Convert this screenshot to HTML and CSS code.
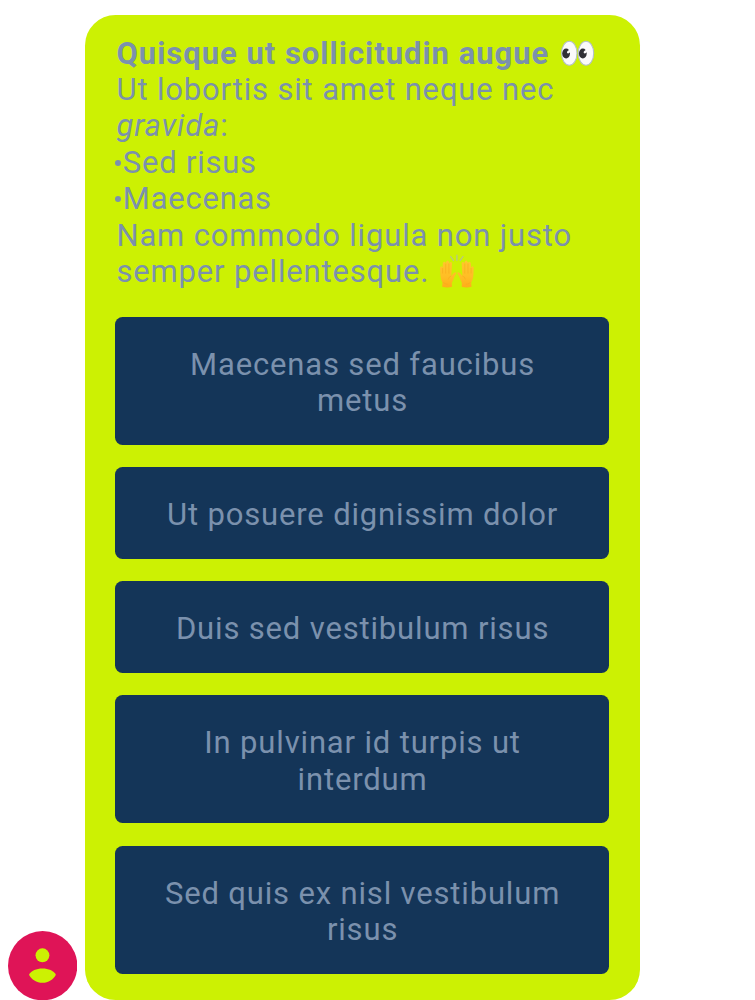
FILE: index.html
```html
<!DOCTYPE html>
<html lang="la">
<head>
<meta charset="utf-8">
<title>Chat message</title>
<link rel="stylesheet" href="styles.css">
</head>
<body>
<main class="message">
  <svg class="avatar" viewBox="0 0 69 69" aria-hidden="true">
    <circle cx="34.5" cy="34.5" r="34.5" fill="#df1457"/>
    <circle cx="34.3" cy="24.2" r="6.9" fill="#ccf103"/>
    <path d="M20.900 43.600C23.200 39.500 28.200 37.300 34.300 37.300S45.400 39.500 47.700 43.600C45.200 48.500 40.200 51.600 34.300 51.600S23.400 48.500 20.900 43.600Z" fill="#ccf103"/>
  </svg>
  <section class="card">
    <div class="text">
      <p><b>Quisque ut sollicitudin augue </b><svg class="emoji eyes" viewBox="0 0 36 36" aria-label="eyes">
        <g fill="#fafafa" stroke="#b4c0c9" stroke-width="1.1"><ellipse cx="9.300" cy="17.300" rx="7.700" ry="12"/><ellipse cx="26" cy="17.300" rx="7.700" ry="12"/></g>
        <g fill="#303035"><ellipse cx="6.100" cy="17.500" rx="3.900" ry="5.100"/><ellipse cx="22.800" cy="17.500" rx="3.900" ry="5.100"/></g>
        <g fill="#fafafa"><ellipse cx="8.700" cy="15.800" rx="2" ry="1.300" transform="rotate(-40 8.700 15.800)"/><ellipse cx="25.400" cy="15.800" rx="2" ry="1.300" transform="rotate(-40 25.400 15.800)"/></g>
      </svg></p>
      <p>Ut lobortis sit amet neque nec<br><i>gravida</i>:</p>
      <ul class="list"><li>Sed risus</li><li>Maecenas</li></ul>
      <p>Nam commodo ligula non justo<br>semper pellentesque. <svg class="emoji hands" viewBox="0 0 36 36" aria-label="raising hands">
        <defs>
          <linearGradient id="skin" x1="0" y1="0" x2="0" y2="1"><stop offset="0" stop-color="#ffc72d"/><stop offset=".6" stop-color="#ffbd25"/><stop offset="1" stop-color="#ffad18"/></linearGradient>
          <g id="hand">
            <path d="M3.200 32.800L3.500 28.500C2 26 1.200 22.500 1.200 18.500L1 14Q1 12.200 2.200 12.200Q3.200 12.200 3.500 14L3.900 9.500Q4 7.800 5.200 7.800T6.500 9L7.200 8Q7.300 6.500 8.600 6.500T9.900 8L10.600 9.300Q10.900 7.800 12 8T13 9.700L12.300 22L14.700 19.100Q16.500 17.600 17.300 18.500Q17.700 19.100 16.800 20.300C14.700 23.500 13.800 27.300 12.800 28.900L13 32.800Q8.300 34.200 3.200 32.800Z" fill="url(#skin)"/>
            <path d="M3.600 14V19.500M6.700 9.500V19.500M9.900 9.500V19.500M4 28.500Q7 30.500 9 30.300M12.300 22Q9.700 22.500 9.300 25.500" fill="none" stroke="#f6a81d" stroke-width=".6"/>
          </g>
        </defs>
        <use href="#hand"/>
        <use href="#hand" transform="translate(35.700 0) scale(-1 1)"/>
        <path d="M11.700 2.500L14.500 6.500M17.900 1.200V6.300M24 2.500L21.200 6.500" fill="none" stroke="#b5c58a" stroke-width="1.300" stroke-linecap="round"/>
      </svg></p>
    </div>
    <div class="options">
      <button class="option">Maecenas sed faucibus<br>metus</button>
      <button class="option">Ut posuere dignissim dolor</button>
      <button class="option">Duis sed vestibulum risus</button>
      <button class="option">In pulvinar id turpis ut<br>interdum</button>
      <button class="option">Sed quis ex nisl vestibulum<br>risus</button>
    </div>
  </section>
</main>
</body>
</html>
```
FILE: styles.css
```css
body {
  margin: 0;
  background: #fff;
  overflow: hidden;
}
.message {
  display: flex;
  align-items: flex-end;
  gap: 7.700px;
  padding: 15.300px 0 0 7.700px;
  font: 400 31px/36.400px Roboto, sans-serif;
  letter-spacing: .840px;
  color: #7b91ad;
}
.avatar {
  width: 69.300px;
  height: 69.300px;
  flex: none;
}
.card {
  box-sizing: border-box;
  width: 555px;
  height: 984.500px;
  padding: 20.300px 30.600px 26.600px;
  border-radius: 30.500px;
  background: #ccf103;
}
.text {
  height: 254.800px;
  padding-left: 1.200px;
  margin-bottom: 26.500px;
  white-space: nowrap;
}
.text b {
  letter-spacing: .980px;
}
.text p {
  margin: 0;
}
.list {
  margin: 0;
  padding: 0;
  list-style: none;
}
.list li {
  display: flex;
  align-items: center;
  margin-left: -1.600px;
  letter-spacing: .750px;
}
.list li::before {
  content: "";
  width: 6px;
  height: 6px;
  margin: 0 2px 1px 0;
  border-radius: 50%;
  background: #7b91ad;
}
.emoji {
  display: inline-block;
  width: 36px;
  height: 36px;
  vertical-align: top;
}
.eyes {
  margin-left: 2px;
}
.hands {
  margin-left: 1px;
}
.options {
  display: flex;
  flex-direction: column;
  gap: 22.600px;
}
.option {
  display: block;
  width: 100%;
  padding: 30px 0 25px .800px;
  border: 0;
  border-radius: 7.600px;
  background: #143558;
  color: inherit;
  font: inherit;
  letter-spacing: inherit;
  text-align: center;
}
```
